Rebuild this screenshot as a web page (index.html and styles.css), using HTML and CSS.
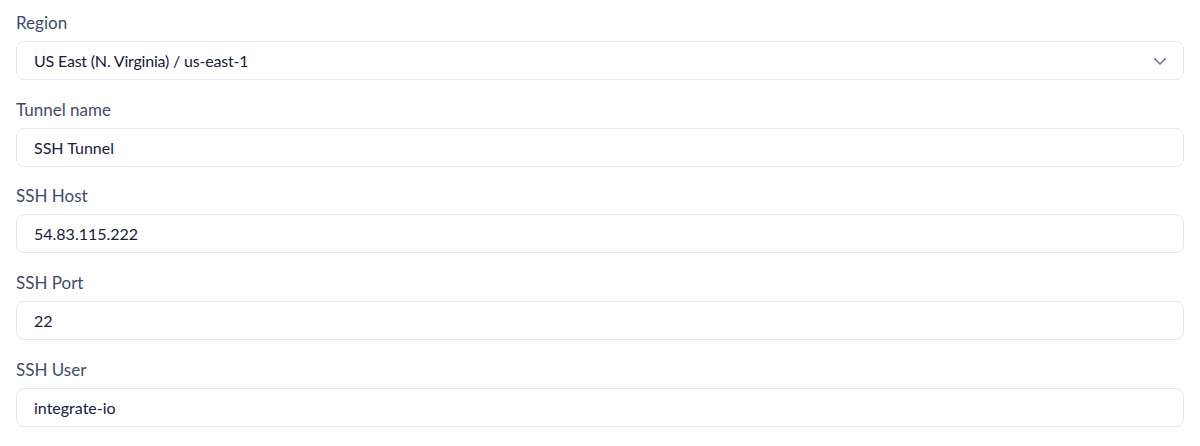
FILE: index.html
```html
<!DOCTYPE html>
<html lang="en">
<head>
<meta charset="utf-8">
<title>SSH Tunnel</title>
<link rel="stylesheet" href="styles.css">
</head>
<body>
<form class="form">
  <div class="field">
    <label class="label" for="region">Region</label>
    <div class="select">
      <span class="select-value" id="region">US East (N. Virginia) / us-east-1</span>
      <svg class="chevron" width="14" height="14" viewBox="0 0 14 14" aria-hidden="true"><path d="M1.5 4.5 L7 10 L12.5 4.5" fill="none" stroke="#5b6b86" stroke-width="1.4" stroke-linecap="round" stroke-linejoin="round"/></svg>
    </div>
  </div>
  <div class="field">
    <label class="label" for="name">Tunnel name</label>
    <input class="input" id="name" type="text" value="SSH Tunnel">
  </div>
  <div class="field">
    <label class="label" for="host">SSH Host</label>
    <input class="input" id="host" type="text" value="54.83.115.222">
  </div>
  <div class="field">
    <label class="label" for="port">SSH Port</label>
    <input class="input" id="port" type="text" value="22">
  </div>
  <div class="field">
    <label class="label" for="user">SSH User</label>
    <input class="input" id="user" type="text" value="integrate-io">
  </div>
</form>
</body>
</html>
```
FILE: styles.css
```css
* { box-sizing: border-box; }
html, body { margin: 0; padding: 0; background: #ffffff; }
body {
  font-family: "Lato", "Noto Sans", sans-serif;
  font-size: 16px;
  color: #16213d;
}
.form {
  padding: 11px 16px 0;
  display: flex;
  flex-direction: column;
  gap: 17.7px;
}
.field {
  display: flex;
  flex-direction: column;
  gap: 6px;
}
.label {
  font-size: 17px;
  line-height: 24px;
  color: #3d4b6d;
}
.input, .select {
  width: 100%;
  height: 39px;
  border: 1px solid #e4e8f1;
  border-radius: 8px;
  background: #ffffff;
  padding: 0 16px 0 17px;
  font-family: inherit;
  font-size: 16px;
  color: #16213d;
  outline: none;
}
.select-value { letter-spacing: -0.2px; }
.select {
  display: flex;
  align-items: center;
  justify-content: space-between;
}
```
